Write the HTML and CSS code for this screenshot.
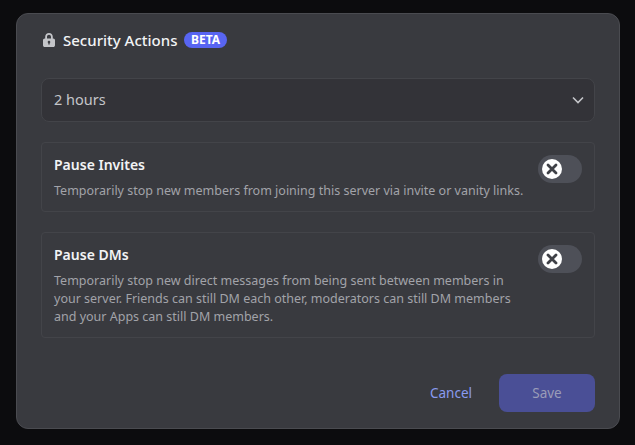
FILE: index.html
```html
<!DOCTYPE html>
<html lang="en">
<head>
    <meta charset="UTF-8">
    <title>Security Actions</title>
    <link rel="stylesheet" href="styles.css">
</head>
<body>
    <div class="modal">
        <div class="modal-header">
            <svg class="lock" width="16" height="16" viewBox="0 0 16 16">
                <path fill="#c4c5c9" fill-rule="evenodd" d="M8 1C5.800 1 4.200 2.700 4.200 4.900V6.500H3.800C2.800 6.500 2 7.300 2 8.300V13.200C2 14.200 2.800 15 3.800 15H12.200C13.200 15 14 14.200 14 13.200V8.300C14 7.300 13.200 6.500 12.200 6.500H11.800V4.900C11.800 2.700 10.200 1 8 1ZM10 6.500V4.900C10 3.700 9.100 2.800 8 2.800C6.900 2.800 6 3.700 6 4.900V6.500ZM9.300 10C9.300 10.500 9 10.900 8.700 11.100V12.600H7.300V11.100C7 10.900 6.700 10.500 6.700 10C6.700 9.300 7.300 8.700 8 8.700C8.700 8.700 9.300 9.300 9.300 10Z"/>
            </svg>
            <h1>Security Actions</h1>
            <span class="badge">BETA</span>
        </div>

        <div class="select">
            <span>2 hours</span>
            <svg width="14" height="14" viewBox="0 0 14 14">
                <path d="M2 4.500L7 9.500L12 4.500" fill="none" stroke="#c4c5c9" stroke-width="1.600"/>
            </svg>
        </div>

        <div class="card">
            <div class="card-text">
                <h2>Pause Invites</h2>
                <p>Temporarily stop new members from joining this server via invite or vanity links.</p>
            </div>
            <div class="toggle">
                <div class="knob">
                    <svg width="12" height="12" viewBox="0 0 12 12">
                        <path d="M2 2L10 10M10 2L2 10" stroke="#3f4147" stroke-width="2.800" stroke-linecap="round"/>
                    </svg>
                </div>
            </div>
        </div>

        <div class="card">
            <div class="card-text">
                <h2>Pause DMs</h2>
                <p>Temporarily stop new direct messages from being sent between members in your server. Friends can still DM each other, moderators can still DM members and your Apps can still DM members.</p>
            </div>
            <div class="toggle">
                <div class="knob">
                    <svg width="12" height="12" viewBox="0 0 12 12">
                        <path d="M2 2L10 10M10 2L2 10" stroke="#3f4147" stroke-width="2.800" stroke-linecap="round"/>
                    </svg>
                </div>
            </div>
        </div>

        <div class="modal-footer">
            <button class="btn-cancel">Cancel</button>
            <button class="btn-save">Save</button>
        </div>
    </div>
</body>
</html>
```

FILE: styles.css
```css
html, body {
    height: 100%;
}
body {
    margin: 0;
    background-color: #0c0c0e;
    font-family: 'Noto Sans', sans-serif;
    color: #f2f3f5;
    overflow: hidden;
}
.modal {
    box-sizing: border-box;
    width: 604px;
    height: 416px;
    margin: 13px 0 0 16px;
    padding: 0 24px;
    background-color: #393a3f;
    border: 1px solid #4a4b50;
    border-radius: 12px;
}
.modal-header {
    display: flex;
    align-items: center;
    height: 52px;
    box-sizing: border-box;
    margin-bottom: 12px;
}
.lock {
    margin-right: 6px;
}
h1 {
    margin: 0;
    font-size: 15px;
    font-weight: 500;
    line-height: 18px;
}
.badge {
    margin-left: 7px;
    padding: 0 6.500px;
    height: 16px;
    line-height: 16px;
    font-size: 12px;
    font-weight: 700;
    color: #fff;
    background-color: #5865f2;
    border-radius: 8px;
}
.select {
    box-sizing: border-box;
    height: 44px;
    display: flex;
    align-items: center;
    justify-content: space-between;
    padding: 0 9px 0 12px;
    background-color: #333338;
    border: 1px solid #434449;
    border-radius: 8px;
    font-size: 14.500px;
    color: #c4c5c9;
}
.select span {
    margin-top: -2px;
}
.card {
    display: flex;
    justify-content: space-between;
    box-sizing: border-box;
    margin-top: 20px;
    padding: 12px 12px 11px 12px;
    border: 1px solid #434449;
    border-radius: 4px;
}
.card-text {
    width: 472px;
}
h2 {
    margin: 0 0 7px;
    font-size: 14px;
    font-weight: 600;
    line-height: 20px;
}
p {
    margin: 0;
    font-size: 12.500px;
    line-height: 18px;
    color: #a2a3a9;
}
.toggle {
    box-sizing: border-box;
    width: 44px;
    height: 28px;
    padding: 4px 0 0 4px;
    background-color: #4e5058;
    border-radius: 14px;
}
.knob {
    width: 20px;
    height: 20px;
    background-color: #fff;
    border-radius: 50%;
    display: flex;
    align-items: center;
    justify-content: center;
}
.modal-footer {
    display: flex;
    justify-content: flex-end;
    align-items: center;
    margin-top: 36px;
}
button {
    font-family: inherit;
    font-size: 13.500px;
    font-weight: 400;
    border: none;
    border-radius: 8px;
}
.btn-cancel {
    background: none;
    color: #8a9bf0;
    margin-right: 27px;
    padding: 0;
}
.btn-save {
    width: 96px;
    height: 38px;
    background-color: #4a4f96;
    color: #9a9cb8;
}
```
